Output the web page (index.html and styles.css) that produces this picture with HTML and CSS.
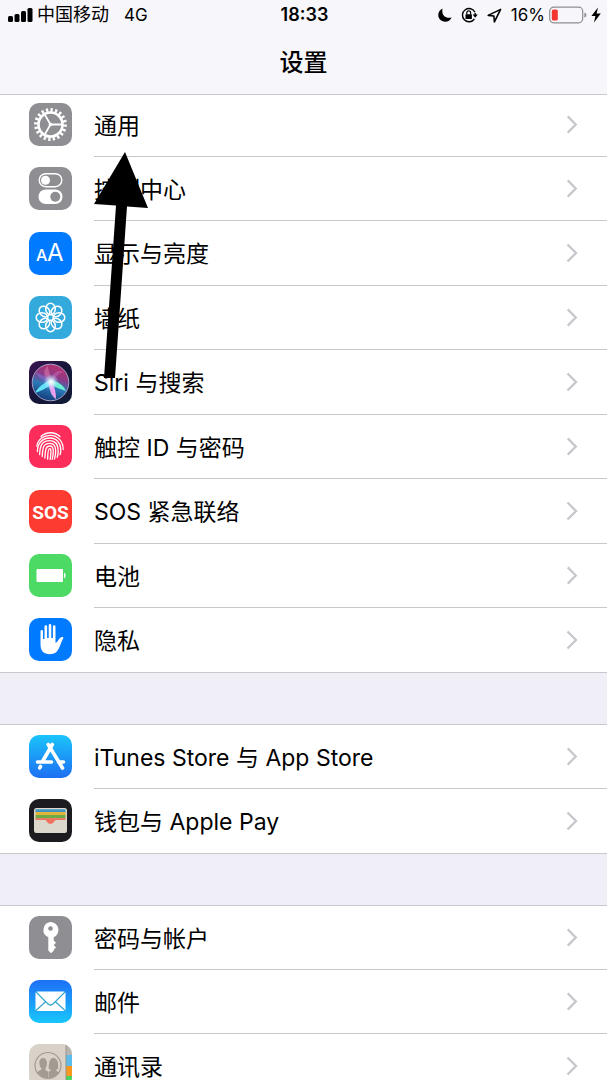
FILE: index.html
```html
<!DOCTYPE html>
<html lang="zh-CN">
<head>
    <meta charset="UTF-8">
    <meta name="viewport" content="width=device-width, initial-scale=1.0">
    <title>设置</title>
    <link rel="stylesheet" href="styles.css">
</head>
<body>
    <header class="header">
        <div class="status-bar">
            <div class="status-left">
                <svg class="signal" width="25" height="16" viewBox="0 0 25 16">
                    <rect x="0" y="9" width="5" height="6" rx="1.5"/>
                    <rect x="6.5" y="7" width="5" height="8" rx="1.5"/>
                    <rect x="13" y="4" width="5" height="11" rx="1.5"/>
                    <rect x="19.5" y="1" width="5" height="14" rx="1.5"/>
                </svg>
                <span class="carrier">中国移动</span>
                <span class="network">4G</span>
            </div>
            <time class="clock">18:33</time>
            <div class="status-right">
                <svg width="14" height="14" viewBox="0 0 14 14">
                    <path d="M4.6.6C-.6 3-.9 9 2.6 12c3.600 3 9.400 1.800 11-2.600C7.600 11.400 3 6.600 4.600.6z"/>
                </svg>
                <svg width="17" height="16" viewBox="0 0 17 16">
                    <path d="M14 5.2A6.6 6.6 0 1 0 13.4 12M14.2 6v2.6" fill="none" stroke="#000" stroke-width="1.4"/>
                    <path d="M11.6 7.4h5.2l-2.6 3.4z"/>
                    <rect x="4.5" y="7.2" width="6.4" height="4.8" rx=".6"/>
                    <path d="M5.8 7.4V5.7a1.9 1.9 0 0 1 3.8 0v1.7" fill="none" stroke="#000" stroke-width="1.2"/>
                </svg>
                <svg width="15" height="15" viewBox="0 0 15 15">
                    <path d="M13.6 1.4 1.2 7.4l5.7.6.5 5.9z" fill="none" stroke="#000" stroke-width="1.6" stroke-linejoin="round"/>
                </svg>
                <span class="percent">16%</span>
                <svg width="38" height="18" viewBox="0 0 38 18">
                    <rect x=".7" y="1.2" width="33" height="15.6" rx="4" fill="none" stroke="#8e8e93" stroke-width="1.2"/>
                    <rect x="2.8" y="3.4" width="6" height="11.2" rx="1.6" fill="#f5352f"/>
                    <path d="M35.4 6.4a2.8 2.8 0 0 1 0 5.4z" fill="#8e8e93"/>
                </svg>
                <svg width="10" height="16" viewBox="0 0 10 16">
                    <path d="M7 .6.4 9h4L3 15.4 9.8 6.6H5.6z"/>
                </svg>
            </div>
        </div>
        <h1 class="title">设置</h1>
    </header>

    <main class="settings">
        <nav class="group group-first">
            <a class="row" href="#general">
                <svg class="icon" viewBox="0 0 43 43">
                    <rect width="43" height="43" rx="10" fill="#8e8e93"/>
                    <g fill="none" stroke="#fff">
                        <circle cx="21.5" cy="21.5" r="14.4" stroke-width="4" pathLength="40" stroke-dasharray="1 1"/>
                        <circle cx="21.5" cy="21.5" r="12" stroke-width="2.6"/>
                        <path d="M21.5 21.5h12M21.5 21.5l-6-10.4M21.5 21.5l-6 10.4" stroke-width="1.8"/>
                    </g>
                    <circle cx="21.5" cy="21.5" r="1.8" fill="#fff"/>
                </svg>
                <span class="label">通用</span>
                <svg class="chevron" viewBox="0 0 12 20"><path d="M1.5 1.5 10 10l-8.5 8.5"/></svg>
            </a>
            <a class="row" href="#control-center">
                <svg class="icon" viewBox="0 0 43 43">
                    <rect width="43" height="43" rx="10" fill="#8e8e93"/>
                    <rect x="10.2" y="6.7" width="22.6" height="13" rx="6.5" fill="none" stroke="#fff" stroke-width="1.4"/>
                    <circle cx="16.5" cy="13.2" r="4.5" fill="#fff"/>
                    <rect x="9.5" y="22.5" width="24" height="14.5" rx="7.2" fill="#fff"/>
                    <circle cx="26.3" cy="29.7" r="5" fill="#8e8e93"/>
                </svg>
                <span class="label">控制中心</span>
                <svg class="chevron" viewBox="0 0 12 20"><path d="M1.5 1.5 10 10l-8.5 8.5"/></svg>
            </a>
            <a class="row" href="#display">
                <svg class="icon" viewBox="0 0 43 43">
                    <rect width="43" height="43" rx="10" fill="#007aff"/>
                    <text class="icon-text" x="7" y="29" font-size="16">A</text>
                    <text class="icon-text icon-text-thin" x="18" y="29" font-size="24">A</text>
                </svg>
                <span class="label">显示与亮度</span>
                <svg class="chevron" viewBox="0 0 12 20"><path d="M1.5 1.5 10 10l-8.5 8.5"/></svg>
            </a>
            <a class="row" href="#wallpaper">
                <svg class="icon" viewBox="0 0 43 43">
                    <rect width="43" height="43" rx="10" fill="#34aadc"/>
                    <g fill="none" stroke="#fff" stroke-width="1.5">
                        <ellipse cx="21.5" cy="13" rx="4.8" ry="5.8"/>
                        <ellipse cx="21.5" cy="13" rx="4.8" ry="5.8" transform="rotate(45 21.5 21.5)"/>
                        <ellipse cx="21.5" cy="13" rx="4.8" ry="5.8" transform="rotate(90 21.5 21.5)"/>
                        <ellipse cx="21.5" cy="13" rx="4.8" ry="5.8" transform="rotate(135 21.5 21.5)"/>
                        <ellipse cx="21.5" cy="13" rx="4.8" ry="5.8" transform="rotate(180 21.5 21.5)"/>
                        <ellipse cx="21.5" cy="13" rx="4.8" ry="5.8" transform="rotate(225 21.5 21.5)"/>
                        <ellipse cx="21.5" cy="13" rx="4.8" ry="5.8" transform="rotate(270 21.5 21.5)"/>
                        <ellipse cx="21.5" cy="13" rx="4.8" ry="5.8" transform="rotate(315 21.5 21.5)"/>
                    </g>
                </svg>
                <span class="label">墙纸</span>
                <svg class="chevron" viewBox="0 0 12 20"><path d="M1.5 1.5 10 10l-8.5 8.5"/></svg>
            </a>
            <a class="row" href="#siri">
                <svg class="icon" viewBox="0 0 43 43">
                    <defs>
                        <linearGradient id="siri-bg" x1="0" y1="0" x2="1" y2="1">
                            <stop offset="0" stop-color="#3c1452"/>
                            <stop offset=".5" stop-color="#151638"/>
                            <stop offset="1" stop-color="#101c35"/>
                        </linearGradient>
                        <linearGradient id="siri-orb" x1=".65" y1="0" x2=".35" y2="1">
                            <stop offset="0" stop-color="#b8306c"/>
                            <stop offset=".35" stop-color="#8a3b88"/>
                            <stop offset=".6" stop-color="#2a7ab8"/>
                            <stop offset="1" stop-color="#143a78"/>
                        </linearGradient>
                        <radialGradient id="siri-glow">
                            <stop offset="0" stop-color="#fff"/>
                            <stop offset=".35" stop-color="#e0f3ff" stop-opacity=".8"/>
                            <stop offset="1" stop-color="#8fd0ff" stop-opacity="0"/>
                        </radialGradient>
                    </defs>
                    <rect width="43" height="43" rx="10" fill="url(#siri-bg)"/>
                    <circle cx="21.5" cy="21.5" r="18.3" fill="url(#siri-orb)" stroke="#a9a0c8" stroke-width="1"/>
                    <path d="M22 21C14 18 13 9 19 5c0 6 4 9 3 16z" fill="#f08ab8" opacity=".45"/>
                    <path d="M22 21C22 13 28 8 35 11c-6 1-8 6-13 10z" fill="#c86ab8" opacity=".5"/>
                    <path d="M22 21C15 20 8 17 7 11c5 3 11 4 15 10z" fill="#8a72e0" opacity=".5"/>
                    <path d="M22 19C16 21 9 26 6 32c6-2 12-5 17-9z" fill="#63e2f8"/>
                    <path d="M21 19C29 20 35 25 37 30c-6-2-11-4-16-7z" fill="#6cf0d4"/>
                    <path d="M20 21C20 28 22 35 27 38c0-6-1-12-4-17z" fill="#eda0ee"/>
                    <circle cx="22" cy="21" r="8" fill="url(#siri-glow)"/>
                </svg>
                <span class="label">Siri 与搜索</span>
                <svg class="chevron" viewBox="0 0 12 20"><path d="M1.5 1.5 10 10l-8.5 8.5"/></svg>
            </a>
            <a class="row" href="#touch-id">
                <svg class="icon" viewBox="0 0 43 43">
                    <rect width="43" height="43" rx="10" fill="#fc2d5b"/>
                    <g fill="none" stroke="#fff" stroke-width="1.3" stroke-linecap="round">
                        <path d="M12 11.5C17 6.5 26 6.5 31 11.5"/>
                        <path d="M7.8 21C9 14 15 10.3 21 10.3c8 0 13.2 6.2 13.2 14.2"/>
                        <path d="M8.4 26.5C8.5 18 13.5 13 21 13c6.5 0 10.8 5 10.8 12 0 2-.3 3.5-.8 4.7"/>
                        <path d="M10.6 29.5C11 21 12.5 15.7 21 15.7c5.5 0 8.2 4.3 8.2 10.3 0 2.5-.3 4.5-1 6.3"/>
                        <path d="M13.2 31.5c.6-8 .3-13.1 7.8-13.1 4 0 5.7 3.2 5.7 7.6 0 3-.4 5.5-1.2 8"/>
                        <path d="M15.9 33c.5-7 .2-12 5.1-12 2.5 0 3.3 2.2 3.3 5 0 3-.4 5.7-1.1 8.3"/>
                        <path d="M18.6 34c.4-6 .1-10.4 2.2-10.4 1.7 0 1.3 4.6.3 10.8"/>
                    </g>
                </svg>
                <span class="label">触控 ID 与密码</span>
                <svg class="chevron" viewBox="0 0 12 20"><path d="M1.5 1.5 10 10l-8.5 8.5"/></svg>
            </a>
            <a class="row" href="#sos">
                <svg class="icon" viewBox="0 0 43 43">
                    <rect width="43" height="43" rx="10" fill="#fd3b30"/>
                    <text class="icon-sos" x="21.5" y="28.5" font-size="19" text-anchor="middle">SOS</text>
                </svg>
                <span class="label">SOS 紧急联络</span>
                <svg class="chevron" viewBox="0 0 12 20"><path d="M1.5 1.5 10 10l-8.5 8.5"/></svg>
            </a>
            <a class="row" href="#battery">
                <svg class="icon" viewBox="0 0 43 43">
                    <rect width="43" height="43" rx="10" fill="#4cd964"/>
                    <rect x="7.5" y="15" width="26.5" height="13" rx="1" fill="#fff"/>
                    <path d="M35 18.5a3.5 3.5 0 0 1 0 6z" fill="#fff"/>
                </svg>
                <span class="label">电池</span>
                <svg class="chevron" viewBox="0 0 12 20"><path d="M1.5 1.5 10 10l-8.5 8.5"/></svg>
            </a>
            <a class="row" href="#privacy">
                <svg class="icon" viewBox="0 0 43 43">
                    <rect width="43" height="43" rx="10" fill="#007aff"/>
                    <path d="M11.5 13.2a1.2 1.2 0 0 1 2.5 0V21h1.5V8.5a1.3 1.3 0 0 1 2.6 0V20h1.6V7.3a1.3 1.3 0 0 1 2.6 0V20h1.6V8.5a1.3 1.3 0 0 1 2.6 0V25c2.5-1.2 3.5-5 5.7-5.8.9-.4 2.6-.2 2.1.8-2.8 5-3.3 10-6.4 13.5-3.3 3.7-11 3.7-14.3 0-1.6-1.8-2.1-4.5-2.1-8z" fill="#fff"/>
                </svg>
                <span class="label">隐私</span>
                <svg class="chevron" viewBox="0 0 12 20"><path d="M1.5 1.5 10 10l-8.5 8.5"/></svg>
            </a>
        </nav>

        <nav class="group">
            <a class="row" href="#store">
                <svg class="icon" viewBox="0 0 43 43">
                    <defs>
                        <linearGradient id="store-bg" x1="0" y1="0" x2="0" y2="1">
                            <stop offset="0" stop-color="#1bc4fb"/>
                            <stop offset="1" stop-color="#1d6ff2"/>
                        </linearGradient>
                    </defs>
                    <rect width="43" height="43" rx="10" fill="url(#store-bg)"/>
                    <g fill="none" stroke="#fff" stroke-width="3.6" stroke-linecap="round">
                        <path d="M23.3 9.5 13.5 26.5M19.2 9.5 33.5 33M8.5 27h14M29.5 27h5M11.5 31.5l-.8 1.4"/>
                    </g>
                </svg>
                <span class="label">iTunes Store 与 App Store</span>
                <svg class="chevron" viewBox="0 0 12 20"><path d="M1.5 1.5 10 10l-8.5 8.5"/></svg>
            </a>
            <a class="row" href="#wallet">
                <svg class="icon" viewBox="0 0 43 43">
                    <rect width="43" height="43" rx="10" fill="#1c1c20"/>
                    <rect x="5" y="9" width="33" height="25" rx="2.5" fill="#ddd8cd"/>
                    <rect x="6.5" y="10.3" width="30" height="4" rx="1" fill="#3f94bd"/>
                    <rect x="6.5" y="13" width="30" height="3.5" fill="#e3b43b"/>
                    <rect x="6.5" y="16" width="30" height="3.5" fill="#6cab45"/>
                    <path d="M6.5 19.3h30V21H27c-1.7 0-2 3.8-5.5 3.8S17.7 21 16 21H6.5z" fill="#f2705e"/>
                </svg>
                <span class="label">钱包与 Apple Pay</span>
                <svg class="chevron" viewBox="0 0 12 20"><path d="M1.5 1.5 10 10l-8.5 8.5"/></svg>
            </a>
        </nav>

        <nav class="group">
            <a class="row" href="#accounts">
                <svg class="icon" viewBox="0 0 43 43">
                    <rect width="43" height="43" rx="10" fill="#8e8e93"/>
                    <path d="M21.5 6a8 8 0 0 1 3.2 15.3v3.2l2.3 2.3-2.3 2.3 2.3 2.3-2.3 2.3v1l-2.7 2.5-2.7-2.7V21.3A8 8 0 0 1 21.5 6z" fill="#fff"/>
                    <circle cx="21.5" cy="12.5" r="2.3" fill="#8e8e93"/>
                </svg>
                <span class="label">密码与帐户</span>
                <svg class="chevron" viewBox="0 0 12 20"><path d="M1.5 1.5 10 10l-8.5 8.5"/></svg>
            </a>
            <a class="row" href="#mail">
                <svg class="icon" viewBox="0 0 43 43">
                    <defs>
                        <linearGradient id="mail-bg" x1="0" y1="0" x2="0" y2="1">
                            <stop offset="0" stop-color="#1d6ff5"/>
                            <stop offset="1" stop-color="#19c6fb"/>
                        </linearGradient>
                    </defs>
                    <rect width="43" height="43" rx="10" fill="url(#mail-bg)"/>
                    <rect x="6.5" y="11.5" width="30" height="19.5" rx="1.8" fill="#fff"/>
                    <path d="m7 12 11.5 11.5c2 2 4 2 6 0L36 12M7 30.5l9.8-9M36 30.5l-9.8-9" fill="none" stroke="#36a6cf" stroke-width="1.2"/>
                </svg>
                <span class="label">邮件</span>
                <svg class="chevron" viewBox="0 0 12 20"><path d="M1.5 1.5 10 10l-8.5 8.5"/></svg>
            </a>
            <a class="row" href="#contacts">
                <svg class="icon" viewBox="0 0 43 43">
                    <defs>
                        <clipPath id="contacts-clip"><rect width="43" height="43" rx="10"/></clipPath>
                    </defs>
                    <g clip-path="url(#contacts-clip)">
                        <rect width="43" height="43" fill="#d8d2c8"/>
                        <rect x="37" width="6" height="11" fill="#b9b5ae"/>
                        <rect x="37" y="11" width="6" height="11" fill="#5ebcec"/>
                        <rect x="37" y="22" width="6" height="10" fill="#f7991f"/>
                        <rect x="37" y="32" width="6" height="11" fill="#4fd35f"/>
                        <path d="M37 0v43" stroke="#8d8981" stroke-width=".8"/>
                        <circle cx="19" cy="21.5" r="13" fill="none" stroke="#a39b92" stroke-width="1.2"/>
                        <path d="M8.5 28c2-2 4-1.5 4-3.5-3-3-3-10.500 1.500-10.500s5 7 2.300 10.500c0 2 1.500 2 2.700 3V34c-4.500 0-8.500-2-10.500-6z" fill="#a39b92"/>
                        <path d="M19.5 34v-6c1-1.500 2.500-1 2.500-2.500-3 0-2.500-1.500-2-5 .5-4 1.500-6.500 4.500-6.500s4.500 3 4.500 6.500c0 3 1 5-2 5 0 2 1.500 1.500 3 3-2 3.500-6 5.500-10.500 5.500z" fill="#a39b92"/>
                    </g>
                </svg>
                <span class="label">通讯录</span>
                <svg class="chevron" viewBox="0 0 12 20"><path d="M1.5 1.5 10 10l-8.5 8.5"/></svg>
            </a>
        </nav>
    </main>

    <!-- Pointer towards the first item -->
    <svg class="pointer" width="54" height="227" viewBox="0 0 54 227">
        <path d="M31 0 54 56 33 54.500 21 226 10 226 22 53.500 0 52z"/>
    </svg>
</body>
</html>
```

FILE: styles.css
```css
* {
    box-sizing: border-box;
}

body {
    margin: 0;
    height: 100vh;
    display: flex;
    flex-direction: column;
    overflow: hidden;
    position: relative;
    background: #f0eef7;
    color: #000;
    font-family: Inter, "Noto Sans CJK SC", sans-serif;
}

.header {
    flex: none;
    background: #f7f6fa;
    border-bottom: 1px solid #c8c7cc;
}

.status-bar {
    display: grid;
    grid-template-columns: 1fr auto 1fr;
    align-items: center;
    height: 30px;
    padding: 0 6px 0 8px;
    font-size: 17px;
    line-height: 30px;
}

.status-left,
.status-right {
    display: flex;
    align-items: center;
}

.status-right {
    justify-content: flex-end;
    gap: 9px;
}

.carrier {
    margin: 0 15px 0 4px;
    font-size: 18px;
}

.percent {
    margin-right: -5px;
}

.status-right svg:last-child {
    margin-left: -5px;
}

.clock {
    font-size: 18px;
    font-weight: 600;
}

.title {
    margin: 0;
    height: 64px;
    font-size: 24px;
    font-weight: 500;
    line-height: 66px;
    text-align: center;
}

.settings {
    flex: 1;
    min-height: 0;
    overflow-y: auto;
    scrollbar-width: none;
}

.group {
    margin-bottom: 51px;
    background: #fff;
    border-bottom: 1px solid #c8c7cc;
}

/* list is scrolled slightly under the header */
.group-first {
    margin-top: -3px;
}

.row {
    display: flex;
    align-items: center;
    height: 65px;
    padding-left: 29px;
    color: inherit;
    text-decoration: none;
}

.row:nth-child(even),
.row:last-child {
    height: 64px;
}

.row:first-child {
    border-top: 1px solid #c8c7cc;
}

.icon {
    flex: none;
    width: 43px;
    height: 43px;
    margin: 0 22px 1px 0;
}

.label {
    flex: 1;
    align-self: stretch;
    padding-top: 2px;
    border-bottom: 1px solid #c8c7cc;
    font-size: 23px;
    line-height: 62px;
    white-space: nowrap;
}

.chevron {
    align-self: stretch;
    width: 41px;
    height: auto;
    padding: 22px 29px 22px 0;
    border-bottom: 1px solid #c8c7cc;
    fill: none;
    stroke: #c7c7cc;
    stroke-width: 2.4;
}

.row:last-child .label,
.row:last-child .chevron {
    border-bottom: 0;
}

.icon-text,
.icon-sos {
    fill: #fff;
    font-family: Inter, sans-serif;
    font-weight: 500;
}

.icon-text-thin {
    font-weight: 400;
}

.icon-sos {
    font-family: Roboto, sans-serif;
    font-weight: 700;
}

.pointer {
    position: absolute;
    left: 94px;
    top: 152px;
}
```
